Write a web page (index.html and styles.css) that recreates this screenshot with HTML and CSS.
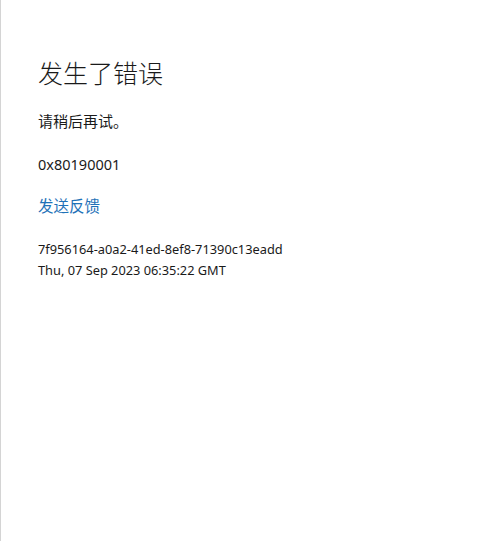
FILE: index.html
```html
<!DOCTYPE html>
<html lang="zh-CN">
<head>
<meta charset="utf-8">
<link rel="stylesheet" href="styles.css">
</head>
<body>
<main class="page">
  <h1 class="title">发生了错误</h1>
  <p class="message">请稍后再试。</p>
  <p class="code">0x80190001</p>
  <a class="feedback" href="#">发送反馈</a>
  <div class="details">
    <div class="line">7f956164-a0a2-41ed-8ef8-71390c13eadd</div>
    <div class="line">Thu, 07 Sep 2023 06:35:22 GMT</div>
  </div>
</main>
</body>
</html>
```
FILE: styles.css
```css
html, body {
  margin: 0;
  padding: 0;
  background: #ffffff;
  height: 100%;
}
body {
  font-family: "Noto Sans", "Noto Sans CJK SC", sans-serif;
  color: #1a1a1a;
  border-left: 1px solid #d4d4d4;
  box-sizing: border-box;
}
.page {
  padding: 54px 0 0 37px;
  display: flex;
  flex-direction: column;
  align-items: flex-start;
}
.title {
  margin: 0;
  font-family: "Noto Sans CJK SC", sans-serif;
  font-weight: 300;
  font-size: 25px;
  line-height: 36px;
  color: #1a1a1a;
}
.message {
  margin: 20px 0 0;
  font-family: "Noto Sans CJK SC", sans-serif;
  font-size: 15px;
  line-height: 22px;
}
.code {
  margin: 21px 0 0;
  font-size: 14.5px;
  line-height: 22px;
}
.feedback {
  margin-top: 19px;
  font-family: "Noto Sans CJK SC", sans-serif;
  font-size: 15.5px;
  line-height: 22px;
  color: #1f72b8;
  text-decoration: none;
}
.details {
  margin-top: 23px;
  font-size: 12.8px;
  line-height: 21px;
}
```
